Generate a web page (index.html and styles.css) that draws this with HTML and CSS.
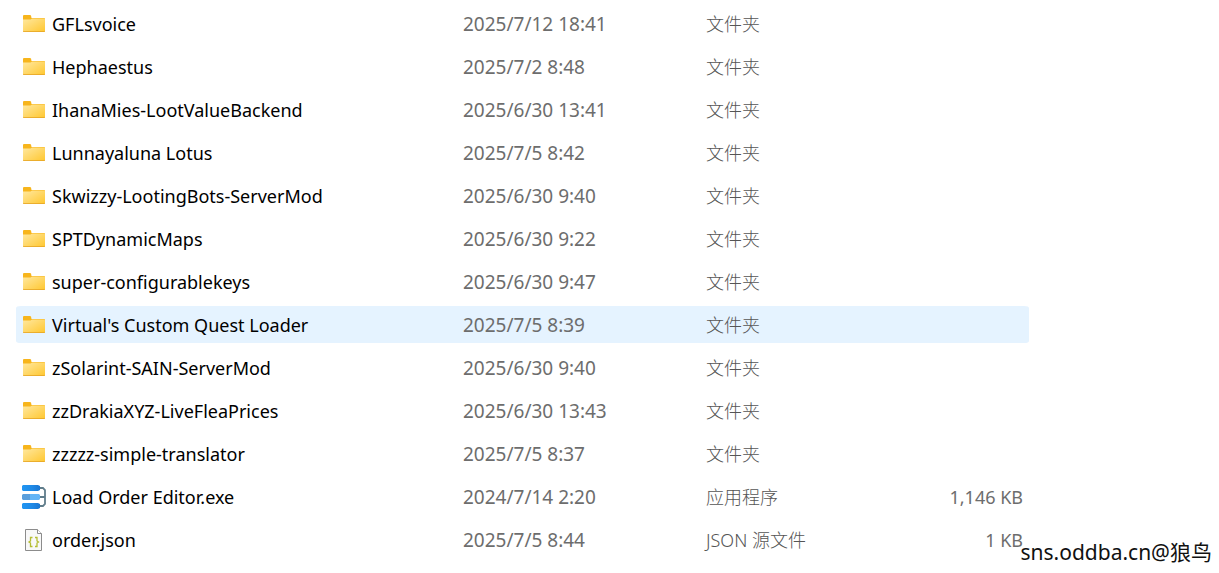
FILE: index.html
```html
<!DOCTYPE html>
<html lang="zh-CN">
<head>
  <meta charset="UTF-8">
  <title>mods</title>
  <link rel="stylesheet" href="styles.css">
</head>
<body>

<!-- Icons -->
<svg class="sprite" aria-hidden="true">
  <defs>
    <linearGradient id="folder-fill" x1="0" y1="0" x2="1" y2="1">
      <stop offset="0" stop-color="#ffe8a0"/>
      <stop offset="1" stop-color="#ffc72f"/>
    </linearGradient>
    <linearGradient id="bar-fill">
      <stop offset="0" stop-color="#2196f3"/>
      <stop offset="0.6" stop-color="#1e88e5"/>
      <stop offset="1" stop-color="#1976d2"/>
    </linearGradient>
  </defs>
  <symbol id="folder" viewBox="0 0 24 24">
    <path d="M1 4q0-1 1-1h6q.6 0 1 .5L9.500 6H22q1 0 1 1v2H1z" fill="#f7b51c"/>
    <path d="M1 7.500h7.500L10 6.500h12q1 0 1 1V19q0 1-1 1H2q-1 0-1-1z" fill="url(#folder-fill)"/>
    <path d="M1 18.800q0 1.200 1 1.200h20q1 0 1-1.200l-1 .4H2z" fill="#e5a323"/>
  </symbol>
  <symbol id="exe" viewBox="0 0 24 24">
    <path d="M16 3h5l2 2v14l-2 2h-5M16 12h7" fill="none" stroke="#607d8b" stroke-width="1.800"/>
    <path d="M1 0h15l2 1v4l-2 1H1L0 5V1z" fill="url(#bar-fill)"/>
    <path d="M1 9h15l2 1v4l-2 1H1l-1-1v-4z" fill="#5a9fdc"/>
    <path d="M8 9h8l2 1v4l-2 1H8z" fill="#64b5f6"/>
    <path d="M1 18h15l2 1v4l-2 1H1l-1-1v-4z" fill="url(#bar-fill)"/>
  </symbol>
  <symbol id="json" viewBox="0 0 24 24">
    <path d="M3.500 1.500h12l4 4v17h-16z" fill="#f8f8f8" stroke="#8c8c8c"/>
    <path d="M15.500 1.500v4h4" fill="#fff" stroke="#8c8c8c"/>
    <path d="M10.500 9.500h-2V13l-1.500 1 1.500 1v3.500h2M13 9.500h2V13l1.500 1-1.500 1v3.500h-2" fill="none" stroke="#b5bd32" stroke-width="1.300"/>
  </symbol>
</svg>

<table class="files">
  <colgroup>
    <col class="col-name">
    <col class="col-date">
    <col class="col-type">
    <col class="col-size">
  </colgroup>
  <tbody>
    <tr>
      <td class="name"><div class="item"><svg class="icon"><use href="#folder"/></svg>GFLsvoice</div></td>
      <td class="date">2025/7/12 18:41</td><td class="type">文件夹</td><td class="size"></td>
    </tr>
    <tr>
      <td class="name"><div class="item"><svg class="icon"><use href="#folder"/></svg>Hephaestus</div></td>
      <td class="date">2025/7/2 8:48</td><td class="type">文件夹</td><td class="size"></td>
    </tr>
    <tr>
      <td class="name"><div class="item"><svg class="icon"><use href="#folder"/></svg>IhanaMies-LootValueBackend</div></td>
      <td class="date">2025/6/30 13:41</td><td class="type">文件夹</td><td class="size"></td>
    </tr>
    <tr>
      <td class="name"><div class="item"><svg class="icon"><use href="#folder"/></svg>Lunnayaluna Lotus</div></td>
      <td class="date">2025/7/5 8:42</td><td class="type">文件夹</td><td class="size"></td>
    </tr>
    <tr>
      <td class="name"><div class="item"><svg class="icon"><use href="#folder"/></svg>Skwizzy-LootingBots-ServerMod</div></td>
      <td class="date">2025/6/30 9:40</td><td class="type">文件夹</td><td class="size"></td>
    </tr>
    <tr>
      <td class="name"><div class="item"><svg class="icon"><use href="#folder"/></svg>SPTDynamicMaps</div></td>
      <td class="date">2025/6/30 9:22</td><td class="type">文件夹</td><td class="size"></td>
    </tr>
    <tr>
      <td class="name"><div class="item"><svg class="icon"><use href="#folder"/></svg>super-configurablekeys</div></td>
      <td class="date">2025/6/30 9:47</td><td class="type">文件夹</td><td class="size"></td>
    </tr>
    <tr class="active">
      <td class="name"><div class="item"><svg class="icon"><use href="#folder"/></svg>Virtual's Custom Quest Loader</div></td>
      <td class="date">2025/7/5 8:39</td><td class="type">文件夹</td><td class="size"></td>
    </tr>
    <tr>
      <td class="name"><div class="item"><svg class="icon"><use href="#folder"/></svg>zSolarint-SAIN-ServerMod</div></td>
      <td class="date">2025/6/30 9:40</td><td class="type">文件夹</td><td class="size"></td>
    </tr>
    <tr>
      <td class="name"><div class="item"><svg class="icon"><use href="#folder"/></svg>zzDrakiaXYZ-LiveFleaPrices</div></td>
      <td class="date">2025/6/30 13:43</td><td class="type">文件夹</td><td class="size"></td>
    </tr>
    <tr>
      <td class="name"><div class="item"><svg class="icon"><use href="#folder"/></svg>zzzzz-simple-translator</div></td>
      <td class="date">2025/7/5 8:37</td><td class="type">文件夹</td><td class="size"></td>
    </tr>
    <tr>
      <td class="name"><div class="item"><svg class="icon"><use href="#exe"/></svg>Load Order Editor.exe</div></td>
      <td class="date">2024/7/14 2:20</td><td class="type">应用程序</td><td class="size">1,146 KB</td>
    </tr>
    <tr>
      <td class="name"><div class="item"><svg class="icon"><use href="#json"/></svg>order.json</div></td>
      <td class="date">2025/7/5 8:44</td><td class="type">JSON 源文件</td><td class="size">1 KB</td>
    </tr>
  </tbody>
</table>

<div class="watermark">sns.oddba.cn@狼鸟</div>

</body>
</html>
```
FILE: styles.css
```css
body {
  margin: 0;
  padding: 2px 190px 0 16px;
  background: #fff;
  font-family: "Noto Sans", "Noto Sans CJK SC", sans-serif;
  font-size: 18px;
  line-height: 24px;
}
.sprite {
  position: absolute;
  width: 0;
  height: 0;
}
.files {
  width: 100%;
  table-layout: fixed;
  border-collapse: separate;
  border-spacing: 0;
  color: #6d6d6d;
}
.col-name {
  width: 441px;
}
.col-date {
  width: 243px;
}
.col-type {
  width: 200px;
}
.files td {
  box-sizing: border-box;
  height: 43px;
  padding: 0 6px;
  border: solid transparent;
  border-width: 3px 0;
  background-clip: padding-box;
  white-space: nowrap;
}
.files .name {
  color: #000;
}
.files .date {
  font-size: 19px;
}
.files .type {
  color: #555;
  font-weight: 300;
}
.files .size {
  text-align: right;
}
.item {
  display: flex;
  align-items: center;
  gap: 6px;
}
.icon {
  width: 24px;
  height: 24px;
}
.active td {
  background-color: #e5f3ff;
}
.active td:first-child {
  border-radius: 5px 0 0 5px;
}
.active td:last-child {
  border-radius: 0 5px 5px 0;
}
.watermark {
  position: absolute;
  right: 7px;
  bottom: 9px;
  color: #111;
  font-size: 21px;
}
```
